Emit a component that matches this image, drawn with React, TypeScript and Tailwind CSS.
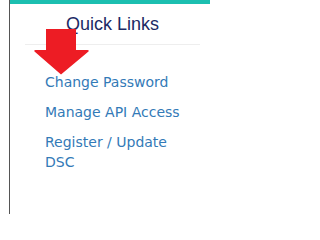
export default function App() {
  const links = ["Change Password", "Manage API Access", "Register / Update DSC"];

  return (
    <div className="relative w-[210px] h-[214px] overflow-hidden bg-white">
      <div className="ml-[9px] h-full border-l border-[#555555]">
        <div className="h-full border-t-4 border-[#1cbfb0] pl-[15px] pr-[10px]">
          <h3 className="pt-[9px] pb-[9px] text-center text-[18px] leading-[22px] text-[#1b2a65] font-['Liberation_Sans',Arial,sans-serif]">
            Quick Links
          </h3>
          <div className="h-px bg-[#eeeeee]" />
          <ul className="mt-[27px] flex flex-col gap-[10px] pl-[20px] pr-[10px] font-['DejaVu_Sans',Verdana,sans-serif] text-[14px] leading-[20px] text-[#337ab7]">
            {links.map((l) => (
              <li key={l}>
                <a href="#">{l}</a>
              </li>
            ))}
          </ul>
        </div>
      </div>

      {/* red annotation arrow */}
      <svg
        className="absolute left-0 top-0 pointer-events-none"
        width="210"
        height="214"
        viewBox="0 0 210 214"
      >
        <path
          d="M46 29 H76 V50 H87.5 Q89.5 50 88.5 51.5 L61 74.5 L34.5 51.5 Q33.5 50 35.5 50 H46 Z"
          fill="#ed1c24"
        />
      </svg>
    </div>
  );
}
